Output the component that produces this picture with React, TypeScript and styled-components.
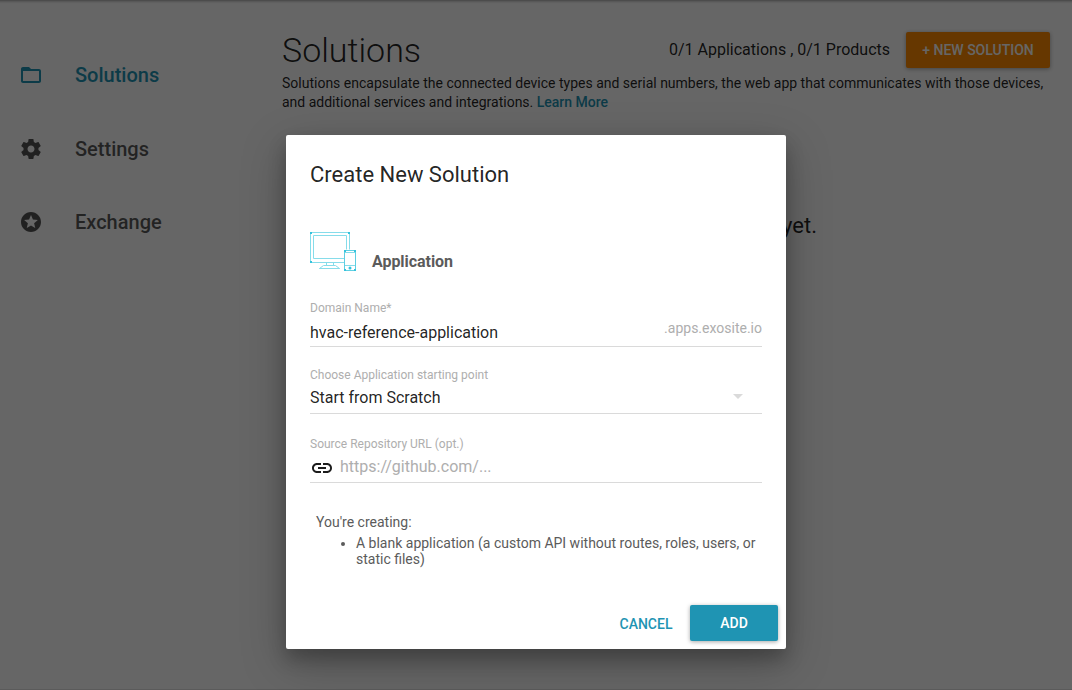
import React from 'react';
import styled, { createGlobalStyle } from 'styled-components';

const GlobalStyle = createGlobalStyle`
  * { box-sizing: border-box; }
  html, body { margin: 0; padding: 0; overflow: hidden; background: #fff; }
  body { font-family: Roboto, "Liberation Sans", sans-serif; color: rgba(0, 0, 0, 0.87); }
  h1, h2, h3, p, ul { margin: 0; padding: 0; font-weight: inherit; }
  button, input { font-family: inherit; border: 0; background: none; padding: 0; outline: 0; }
`;

const Page = styled.div`
  display: flex;
  width: 1072px;
  height: 690px;
  background: #fff;
  border-bottom: 1px solid #e4e4e4;
  box-shadow: inset 0 5px 3px -4px rgba(0, 0, 0, 0.4);
`;

const Sidebar = styled.nav`
  width: 262px;
  padding-top: 38px;
  display: flex;
  flex-direction: column;
`;

const NavItem = styled.a<{ $active?: boolean }>`
  display: flex;
  align-items: center;
  height: 74px;
  padding-left: 19px;
  gap: 32px;
  font-size: 20px;
  font-weight: 500;
  color: ${(p) => (p.$active ? '#1f94b3' : 'rgba(0, 0, 0, 0.67)')};
  svg { width: 24px; height: 24px; fill: currentColor; }
  &:last-child { height: 72px; }
`;

const Main = styled.main`
  flex: 1;
  padding: 32px 22px 0 20px;
`;

const Header = styled.header`
  display: flex;
  align-items: center;
  height: 36px;
`;

const PageTitle = styled.h1`
  flex: 1;
  padding-bottom: 1px;
  font-size: 34px;
  font-weight: 300;
  line-height: 36px;
`;

const Quota = styled.span`
  font-size: 16px;
  line-height: 18px;
  padding-bottom: 1px;
  margin-right: 16px;
`;

const RaisedButton = styled.button<{ $color: string; $width: number }>`
  width: ${(p) => p.$width}px;
  height: 36px;
  border-radius: 2px;
  background: ${(p) => p.$color};
  color: #fff;
  font-size: 14px;
  font-weight: 500;
  box-shadow: 0 1px 4px rgba(0, 0, 0, 0.35);
`;

const Intro = styled.p`
  margin-top: 6px;
  font-size: 14px;
  line-height: 19px;
  white-space: nowrap;
`;

const Link = styled.a`
  color: #1f94b3;
  font-weight: 500;
`;

const EmptyState = styled.p`
  margin-top: 101px;
  padding-right: 233px;
  text-align: right;
  font-size: 22px;
  line-height: 26px;
`;

const Backdrop = styled.div`
  position: absolute;
  top: 0;
  left: 0;
  width: 1072px;
  height: 690px;
  background: rgba(0, 0, 0, 0.6);
  display: flex;
  justify-content: center;
  align-items: flex-start;
  padding-top: 135px;
`;

const Dialog = styled.section`
  width: 500px;
  height: 514px;
  display: flex;
  flex-direction: column;
  background: #fff;
  border-radius: 2px;
  box-shadow: 0 14px 45px rgba(0, 0, 0, 0.25), 0 10px 18px rgba(0, 0, 0, 0.22);
`;

const DialogTitle = styled.h2`
  padding: 24px 24px 0;
  font-size: 22px;
  line-height: 32px;
`;

const DialogBody = styled.div`
  flex: 1;
  padding: 41px 24px 0;
`;

const Kind = styled.div`
  display: flex;
  align-items: flex-end;
  height: 40px;
  gap: 15px;
  svg { width: 47px; height: 40px; }
`;

const KindName = styled.h3`
  font-size: 16px;
  line-height: 20px;
  font-weight: 700;
  letter-spacing: -0.05px;
  color: #5b5b5b;
`;

const Field = styled.label<{ $gap: number; $height: number }>`
  display: flex;
  flex-direction: column;
  justify-content: space-between;
  margin-top: ${(p) => p.$gap}px;
  height: ${(p) => p.$height}px;
  border-bottom: 1px solid #dadada;
`;

const FieldLabel = styled.span`
  font-size: 12px;
  line-height: 14px;
  color: #aeaeae;
`;

const Control = styled.span<{ $bottom: number }>`
  display: flex;
  align-items: center;
  height: 22px;
  margin-bottom: ${(p) => p.$bottom}px;
`;

const Input = styled.input`
  flex: 1;
  min-width: 0;
  height: 22px;
  font-size: 16px;
  color: rgba(0, 0, 0, 0.87);
  &::placeholder { color: #aeaeae; opacity: 1; }
`;

const Suffix = styled.span`
  align-self: flex-start;
  margin-top: -2px;
  font-size: 14px;
  line-height: 18px;
  color: #aeaeae;
`;

const Selected = styled.span`
  flex: 1;
  font-size: 16px;
`;

const Caret = styled.svg`
  width: 10px;
  height: 5px;
  margin: 0 19px 2px 0;
  fill: #dadada;
`;

const Summary = styled.div`
  margin-top: 31px;
  padding-left: 6px;
  font-size: 14px;
  line-height: 16px;
  color: #5b5b5b;
  ul { margin-top: 5px; padding-left: 40px; }
`;

const Actions = styled.footer`
  display: flex;
  justify-content: flex-end;
  gap: 8px;
  padding: 0 8px 8px 0;
`;

const FlatButton = styled.button`
  width: 72px;
  height: 36px;
  padding-top: 2px;
  color: #1f94b3;
  font-size: 14px;
  font-weight: 500;
`;

const LinkGlyph = styled.svg`
  width: 24px;
  height: 24px;
  margin: 4px 6px 0 0;
  fill: #1c1c1c;
`;

const FolderIcon = () => (
  <svg viewBox="0 0 24 24">
    <path d="M20 6h-8l-2-2H4c-1.1 0-1.99.9-1.99 2L2 18c0 1.1.9 2 2 2h16c1.1 0 2-.9 2-2V8c0-1.100-.9-2-2-2zm0 12H4V8h16v10z" />
  </svg>
);

const GearIcon = () => (
  <svg viewBox="0 0 24 24">
    <path d="M19.430 12.980c.040-.320.070-.640.070-.980s-.030-.660-.070-.980l2.110-1.650c.190-.150.240-.420.120-.640l-2-3.460c-.120-.220-.390-.300-.610-.220l-2.490 1c-.520-.400-1.080-.730-1.690-.980l-.380-2.650C14.460 2.180 14.250 2 14 2h-4c-.250 0-.460.180-.490.420l-.380 2.650c-.610.250-1.170.590-1.690.980l-2.490-1c-.230-.090-.490 0-.610.220l-2 3.460c-.130.220-.070.490.120.640l2.110 1.650c-.040.320-.070.650-.070.980s.030.660.070.980l-2.110 1.650c-.190.150-.240.420-.120.640l2 3.460c.120.220.390.300.610.220l2.490-1c.520.400 1.080.730 1.690.980l.380 2.650c.030.240.240.420.490.420h4c.250 0 .460-.180.490-.420l.380-2.650c.610-.250 1.170-.590 1.690-.980l2.490 1c.230.090.490 0 .610-.220l2-3.460c.120-.220.070-.490-.120-.640l-2.110-1.650zM12 15.500c-1.930 0-3.500-1.570-3.500-3.500s1.570-3.500 3.500-3.500 3.500 1.570 3.500 3.500-1.570 3.500-3.500 3.500z" />
  </svg>
);

const StarsIcon = () => (
  <svg viewBox="0 0 24 24">
    <path d="M11.990 2C6.470 2 2 6.480 2 12s4.470 10 9.990 10C17.520 22 22 17.520 22 12S17.520 2 11.990 2zm4.240 16L12 15.450 7.770 18l1.120-4.810-3.730-3.230 4.920-.420L12 5l1.920 4.530 4.920.420-3.730 3.230L16.230 18z" />
  </svg>
);

const LinkIcon = () => (
  <LinkGlyph viewBox="0 0 24 24">
    <path d="M3.900 12c0-1.710 1.390-3.100 3.100-3.100h4V7H7c-2.760 0-5 2.240-5 5s2.240 5 5 5h4v-1.900H7c-1.710 0-3.100-1.390-3.100-3.100zM8 13h8v-2H8v2zm9-6h-4v1.900h4c1.710 0 3.100 1.390 3.100 3.100s-1.390 3.100-3.100 3.100h-4V17h4c2.760 0 5-2.240 5-5s-2.240-5-5-5z" />
  </LinkGlyph>
);

const DevicesIcon = () => (
  <svg viewBox="0 0 47 40" fill="none" stroke="#86dcea" strokeWidth="1">
    <path d="M34.500 30.500H.5V.5h39v17M34.500 26.500H3.500v-23h33v14" />
    <path d="M16.500 30v3.500M23.500 30v3.500M13.500 33.500h12l4 3h-20zM9.500 36.500h20" />
    <rect x="34.500" y="18.500" width="11" height="20" rx="1" stroke="#5fcfe2" />
    <path d="M35 20.500h10M35 33.500h10" />
    <g fill="#35c3dc" stroke="none">
      <path d="M0 0h2v2H0zM38 0h2v2h-2zM0 29h2v2H0zM34 18h2v2h-2zM44 18h2v2h-2zM34 37h2v2h-2zM44 37h2v2h-2z" />
      <circle cx="40" cy="36" r="1.500" />
    </g>
  </svg>
);

export default function App() {
  return (
    <>
      <GlobalStyle />
      <Page>
        <Sidebar>
          <NavItem $active><FolderIcon />Solutions</NavItem>
          <NavItem><GearIcon />Settings</NavItem>
          <NavItem><StarsIcon />Exchange</NavItem>
        </Sidebar>
        <Main>
          <Header>
            <PageTitle>Solutions</PageTitle>
            <Quota>0/1 Applications , 0/1 Products</Quota>
            <RaisedButton $color="#ff8a00" $width={144}>+ NEW SOLUTION</RaisedButton>
          </Header>
          <Intro>
            Solutions encapsulate the connected device types and serial numbers, the web app that communicates with those devices,
            <br />
            and additional services and integrations. <Link>Learn More</Link>
          </Intro>
          <EmptyState>yet.</EmptyState>
        </Main>
      </Page>
      <Backdrop>
        <Dialog role="dialog">
          <DialogTitle>Create New Solution</DialogTitle>
          <DialogBody>
            <Kind>
              <DevicesIcon />
              <KindName>Application</KindName>
            </Kind>
            <Field $gap={29} $height={46}>
              <FieldLabel>Domain Name*</FieldLabel>
              <Control $bottom={3}>
                <Input defaultValue="hvac-reference-application" />
                <Suffix>.apps.exosite.io</Suffix>
              </Control>
            </Field>
            <Field $gap={21} $height={46}>
              <FieldLabel>Choose Application starting point</FieldLabel>
              <Control $bottom={5}>
                <Selected>Start from Scratch</Selected>
                <Caret viewBox="0 0 10 5"><path d="M0 0h10L5 5z" /></Caret>
              </Control>
            </Field>
            <Field $gap={23} $height={46}>
              <FieldLabel>Source Repository URL (opt.)</FieldLabel>
              <Control $bottom={5}>
                <LinkIcon />
                <Input placeholder="https://github.com/..." />
              </Control>
            </Field>
            <Summary>
              <p>You're creating:</p>
              <ul>
                <li>A blank application (a custom API without routes, roles, users, or static files)</li>
              </ul>
            </Summary>
          </DialogBody>
          <Actions>
            <FlatButton>CANCEL</FlatButton>
            <RaisedButton $color="#1f94b3" $width={88}>ADD</RaisedButton>
          </Actions>
        </Dialog>
      </Backdrop>
    </>
  );
}
